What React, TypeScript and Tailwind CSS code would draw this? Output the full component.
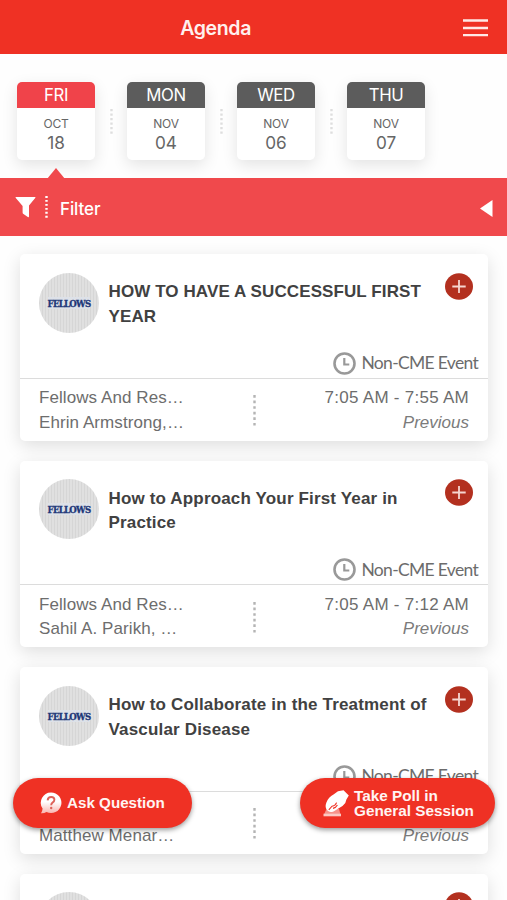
import React from 'react';

interface Day {
    weekday: string;
    month: string;
    date: string;
}

interface Session {
    title: string[];
    titleClass: string;
    track: string;
    speaker: string;
    time: string;
}

const days: Day[] = [
    { weekday: 'FRI', month: 'OCT', date: '18' },
    { weekday: 'MON', month: 'NOV', date: '04' },
    { weekday: 'WED', month: 'NOV', date: '06' },
    { weekday: 'THU', month: 'NOV', date: '07' },
];

const sessions: Session[] = [
    {
        title: ['HOW TO HAVE A SUCCESSFUL FIRST', 'YEAR'],
        titleClass: 'tracking-[0.1px]',
        track: 'Fellows And Res…',
        speaker: 'Ehrin Armstrong,…',
        time: '7:05 AM - 7:55 AM',
    },
    {
        title: ['How to Approach Your First Year in', 'Practice'],
        titleClass: 'tracking-[0.16px]',
        track: 'Fellows And Res…',
        speaker: 'Sahil A. Parikh, …',
        time: '7:05 AM - 7:12 AM',
    },
    {
        title: ['How to Collaborate in the Treatment of', 'Vascular Disease'],
        titleClass: 'tracking-[0.17px]',
        track: 'Fellows And Res…',
        speaker: 'Matthew Menar…',
        time: '7:12 AM - 7:19 AM',
    },
];

const Dots: React.FC<{ className: string }> = ({ className }) => (
    <svg className={className} viewBox="0 0 3 30" preserveAspectRatio="none" fill="none">
        <path d="M1.5 0V30" stroke="currentColor" strokeWidth="2.4" strokeDasharray="2.6 2.8" />
    </svg>
);

const Header: React.FC = () => (
    <header className="relative flex h-[54px] shrink-0 items-center justify-end bg-[#ef3124] pr-[19px]">
        <h1 className="mr-[212px] pt-[3px] font-['Inter'] text-[19.5px] font-semibold tracking-[-0.35px] text-[#fff0ee]">
            Agenda
        </h1>
        <svg className="mt-px h-[18px] w-[25px]" viewBox="0 0 25 18" fill="none">
            <path d="M0 1.5H25M0 9H25M0 16.2H25" stroke="#ffe9e6" strokeWidth="2.3" />
        </svg>
    </header>
);

const DayPicker: React.FC = () => (
    <nav className="flex h-[124px] shrink-0 pl-[17px] pt-[27.5px]">
        {days.map((day, index) => (
            <div key={day.weekday} className="relative flex">
                <div className="h-[78px] w-[78px] overflow-hidden rounded-[5px] bg-white text-center font-['Inter'] text-[#666] shadow-[0_5px_16px_rgba(0,0,0,0.11)]">
                    <div
                        className={`h-[26.5px] text-[16.8px] leading-[27px] tracking-[-0.4px] text-white ${
                            index === 0 ? 'bg-[#f0434a]' : 'bg-[#5c5c5c]'
                        }`}
                    >
                        {day.weekday}
                    </div>
                    <div className="pt-[7px] text-[12px] leading-[17px] tracking-[-0.2px]">{day.month}</div>
                    <div className="text-[17.2px] leading-[21px]">{day.date}</div>
                </div>
                <div className="flex w-8 justify-center pt-[27px]">
                    {index < days.length - 1 && <Dots className="h-[25px] w-[3px] text-[#dedede]" />}
                </div>
            </div>
        ))}
    </nav>
);

const FilterBar: React.FC = () => (
    <div className="relative flex h-[57.5px] shrink-0 items-center bg-[#f0494c] pl-[15px] pr-[14px] pt-[3px] text-white">
        <svg className="absolute left-[47px] -top-[10px] h-[11px] w-[18px]" viewBox="0 0 18 11">
            <path d="M9 0L18 11H0Z" fill="#f0494c" />
        </svg>
        <svg className="-mt-[2px] h-[22px] w-[21px]" viewBox="0 0 21 22" fill="currentColor">
            <path d="M1 1H20Q21 1 20.2 2L14 9.6V20.6Q13.8 21.8 12.8 21L8.5 18Q7.6 17.4 7.6 16.4V10L.8 2Q0 1 1 1Z" />
        </svg>
        <Dots className="-mt-[2px] ml-[9px] h-[22px] w-[3px]" />
        <span className="ml-[12px] pt-[3px] font-['Inter'] text-[17px] font-medium tracking-[-0.1px]">Filter</span>
        <svg className="ml-auto h-[17px] w-[13px]" viewBox="0 0 13 17" fill="currentColor">
            <path d="M0 8.5L12.5 0V17Z" />
        </svg>
    </div>
);

const FellowsBadge: React.FC = () => (
    <div className="flex h-[60px] w-[60px] shrink-0 items-center justify-center rounded-full bg-[repeating-linear-gradient(90deg,#d6d6d6_0,#d6d6d6_1px,#e0e0e0_1px,#e0e0e0_3px)]">
        <span className="whitespace-nowrap bg-[#dde1e8] pt-px font-['DejaVu_Serif_Condensed','DejaVu_Serif',serif] text-[9.5px] font-black leading-[11px] tracking-[-0.7px] text-[#1d3778] [-webkit-text-stroke:0.3px_#1d3778]">
            FELLOWS
        </span>
    </div>
);

const AddButton: React.FC = () => (
    <svg className="ml-auto h-[27px] w-[28px] shrink-0" viewBox="0 0 28 27">
        <ellipse cx="14" cy="13.5" rx="14" ry="13.2" fill="#b3301f" />
        <path d="M7.3 13.5H20.7M14 7V20" stroke="#f6d6d0" strokeWidth="1.8" />
    </svg>
);

const SessionCard: React.FC<{ session: Session }> = ({ session }) => (
    <article className="flex h-[186.5px] shrink-0 flex-col rounded-[5px] bg-white shadow-[0_5px_18px_rgba(0,0,0,0.13)]">
        <div className="flex h-[124.5px] shrink-0 flex-col border-b border-[#dcdcdc]">
            <div className="flex h-[97px] pl-[19px] pr-[15px] pt-[18.5px]">
                <FellowsBadge />
                <h2
                    className={`ml-[9.5px] whitespace-nowrap pt-[7.5px] text-[17px] font-bold leading-[24.5px] text-[#414141] ${session.titleClass}`}
                >
                    {session.title.map((line) => (
                        <span key={line} className="block">
                            {line}
                        </span>
                    ))}
                </h2>
                <AddButton />
            </div>
            <div className="flex items-center justify-end pr-[10px]">
                <svg className="h-[23px] w-[23px]" viewBox="0 0 23 23" fill="none" stroke="#999">
                    <circle cx="11.5" cy="11.5" r="10" strokeWidth="2.6" />
                    <path d="M11.3 6V12.5H16.3" strokeWidth="2.2" />
                </svg>
                <span className="ml-[5px] whitespace-nowrap font-['Lato'] text-[17.5px] leading-[24px] tracking-[-0.68px] text-[#6c6c6c]">
                    Non-CME Event
                </span>
            </div>
        </div>
        <div className="flex px-[19px] pt-[7.5px] text-[17px] leading-[24.5px] text-[#6d6d6d]">
            <div className="w-[213.5px] whitespace-nowrap tracking-[0.08px]">
                <p>{session.track}</p>
                <p>{session.speaker}</p>
            </div>
            <Dots className="mt-[9px] h-[31px] w-[3px] text-[#b4b4b4]" />
            <div className="ml-auto whitespace-nowrap text-right">
                <p className="tracking-[0.27px]">{session.time}</p>
                <p className="italic text-[#7b7b7b]">Previous</p>
            </div>
        </div>
    </article>
);

const QuestionIcon: React.FC = () => (
    <svg className="h-[23px] w-[22px]" viewBox="0 0 22 23">
        <defs>
            <linearGradient id="bubble" x1="0" y1="0" x2="0" y2="1">
                <stop offset="0.45" stopColor="#fff" />
                <stop offset="1" stopColor="#f9b5af" />
            </linearGradient>
        </defs>
        <path d="M11 .5A10.3 10.3 0 1 1 6.5 20Q4 21.5 1 21.2Q2.5 19 2.6 16.6A10.3 10.3 0 0 1 11 .5Z" fill="url(#bubble)" />
        <path
            d="M7.6 8.3Q8 5 11.2 5Q14.4 5 14.4 7.8Q14.4 9.5 12.5 10.6Q11.2 11.5 11.2 13.2"
            fill="none"
            stroke="#dd6259"
            strokeWidth="1.9"
        />
        <circle cx="11.2" cy="16" r="1.2" fill="#dd6259" />
    </svg>
);

const PollIcon: React.FC = () => (
    <svg className="h-[27px] w-[26px]" viewBox="0 0 26 27">
        <path d="M3.5 19H16L17.5 24.5H1Z" fill="#f79289" />
        <path d="M.5 23.7H18V26.3H.5Z" fill="#fbc8c3" />
        <path
            d="M15 1.2L20.5 .2L25.8 5.5L23.4 9.5L22.3 13Q19.5 17 15 18.8L10.5 21.5Q6.5 23 4.5 20.6Q1.4 17.5 3.4 12.5Q5.5 7 10.5 4.5Z"
            fill="#fff"
        />
        <path d="M5.8 19.8L9 16.2Q12.5 15.6 13.6 12.6M10 18.4Q13 17.6 14.4 15" fill="none" stroke="#ef3124" strokeWidth="1.1" />
    </svg>
);

const FloatingActions: React.FC = () => (
    <div className="absolute left-[13px] right-[12px] top-[778px] flex justify-between font-bold text-[#fff4f2]">
        <button className="flex h-[50px] w-[179px] items-center rounded-full bg-[#ef3124] pl-[27px] text-[15.2px] shadow-[0_2px_5px_rgba(0,0,0,0.4)]">
            <QuestionIcon />
            <span className="ml-[5px] whitespace-nowrap">Ask Question</span>
        </button>
        <button className="flex h-[50px] w-[195px] items-center rounded-full bg-[#ef3124] pl-[23px] text-left text-[15.3px] leading-[15px] shadow-[0_2px_5px_rgba(0,0,0,0.4)]">
            <PollIcon />
            <span className="ml-[5px] whitespace-nowrap">
                Take Poll in
                <br />
                General Session
            </span>
        </button>
    </div>
);

export default function App() {
    return (
        <main className="relative flex h-[900px] w-[507px] flex-col overflow-hidden bg-[#fefefe] font-['Liberation_Sans',sans-serif]">
            <Header />
            <DayPicker />
            <FilterBar />
            <section className="flex flex-col gap-5 pl-5 pr-[19px] pt-[18.9px]">
                {sessions.map((session) => (
                    <SessionCard key={session.title[0]} session={session} />
                ))}
                {/* Next card, only its top edge is in view */}
                <article className="flex h-[186.5px] shrink-0 rounded-[5px] bg-white pl-[19px] pr-[15px] pt-[18.5px] shadow-[0_5px_18px_rgba(0,0,0,0.13)]">
                    <div className="h-[60px] w-[60px] rounded-full bg-[repeating-linear-gradient(90deg,#d6d6d6_0,#d6d6d6_1px,#e0e0e0_1px,#e0e0e0_3px)]" />
                    <AddButton />
                </article>
            </section>
            <FloatingActions />
        </main>
    );
}
